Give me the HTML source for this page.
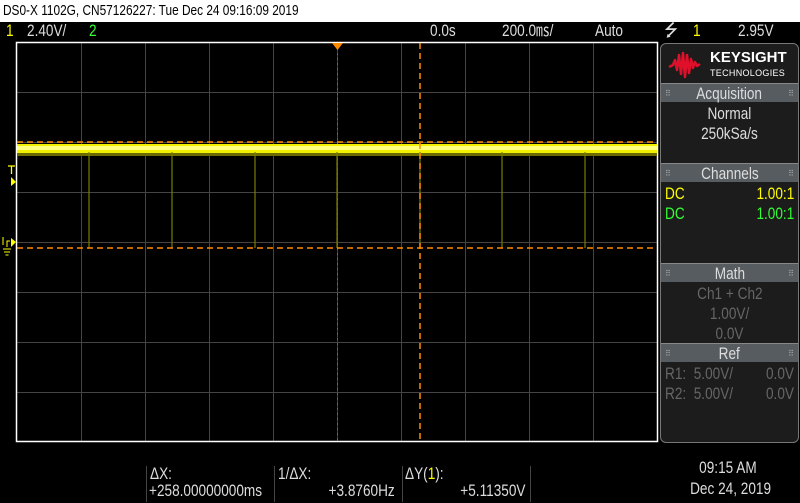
<!DOCTYPE html>
<html><head><meta charset="utf-8"><style>
*{margin:0;padding:0;box-sizing:border-box}
body{width:800px;height:503px;background:#000;overflow:hidden;position:relative;font-family:"Liberation Sans",sans-serif;color:#ddd}
.a{position:absolute;white-space:nowrap}
.n{display:inline-block;transform:scaleX(.8);transform-origin:left center}
.nr{transform-origin:right center}
.nc{transform-origin:center center}
#title{left:0;top:0;width:800px;height:22px;background:#fff;color:#000;font-size:15px;line-height:22px;padding-left:3px}
.h{top:21px;font-size:17px;line-height:20px;color:#ddd}
#panel{left:660px;top:43px;width:139px;height:400px;background:#1c1c1c;border:1px solid #777;border-radius:6px;overflow:hidden}
.bar{position:absolute;left:0;width:137px;height:19px;background:#575c60;color:#ddd;font-size:17px;line-height:19px;text-align:center;border-top:1px solid #888}
.bar:before{content:"⠿";position:absolute;left:4px;font-size:8px;color:#aaa}
.bar:after{content:"⠿";position:absolute;right:4px;font-size:8px;color:#aaa}
.pt{position:absolute;font-size:17px;line-height:20px;white-space:nowrap}
.b{font-size:17px;color:#ddd}
</style></head><body>
<div class="a" id="title"><span class="n" style="transform:scaleX(.79)">DS0-X 1102G, CN57126227: Tue Dec 24 09:16:09 2019</span></div>
<div class="a h" style="left:6px;color:#ff0"><span class="n">1</span></div>
<div class="a h" style="left:27px"><span class="n">2.40V/</span></div>
<div class="a h" style="left:89px;color:#3f3"><span class="n">2</span></div>
<div class="a h" style="left:430px"><span class="n">0.0s</span></div>
<div class="a h" style="left:502px"><span class="n">200.0㎳/</span></div>
<div class="a h" style="left:595px"><span class="n">Auto</span></div>
<div class="a h" style="left:664px">⭍</div>
<div class="a h" style="left:693px;color:#ff0"><span class="n">1</span></div>
<div class="a h" style="left:738px"><span class="n">2.95V</span></div>

<svg class="a" style="left:0;top:0" width="660" height="460">
<g stroke="#444" stroke-width="1">
<line x1="81.5" y1="43" x2="81.5" y2="442"/><line x1="145.5" y1="43" x2="145.5" y2="442"/><line x1="209.5" y1="43" x2="209.5" y2="442"/><line x1="273.5" y1="43" x2="273.5" y2="442"/><line x1="337.5" y1="43" x2="337.5" y2="442"/><line x1="401.5" y1="43" x2="401.5" y2="442"/><line x1="465.5" y1="43" x2="465.5" y2="442"/><line x1="529.5" y1="43" x2="529.5" y2="442"/><line x1="593.5" y1="43" x2="593.5" y2="442"/>
<line x1="16" y1="92.5" x2="658" y2="92.5"/><line x1="16" y1="142.5" x2="658" y2="142.5"/><line x1="16" y1="192.5" x2="658" y2="192.5"/><line x1="16" y1="242.5" x2="658" y2="242.5"/><line x1="16" y1="292.5" x2="658" y2="292.5"/><line x1="16" y1="342.5" x2="658" y2="342.5"/><line x1="16" y1="392.5" x2="658" y2="392.5"/>
</g>
<line x1="337.5" y1="43" x2="337.5" y2="442" stroke="#666" stroke-dasharray="2 3"/>
<rect x="16.5" y="42.5" width="641" height="399" fill="none" stroke="#fff" stroke-width="1.5"/>
<rect x="17" y="148" width="640" height="8" fill="#6b6b00"/>
<rect x="17" y="144" width="640" height="9" fill="#f0f000"/>
<rect x="17" y="146" width="640" height="4" fill="#ffff80"/>
<g stroke="#7a7a00" stroke-width="1.2">
<line x1="89" y1="152" x2="89" y2="248"/><line x1="172" y1="152" x2="172" y2="248"/><line x1="255" y1="152" x2="255" y2="248"/><line x1="337" y1="152" x2="337" y2="248"/><line x1="420" y1="152" x2="420" y2="248"/><line x1="502" y1="152" x2="502" y2="248"/><line x1="585" y1="152" x2="585" y2="248"/>
</g>
<g stroke="#ff8c00" stroke-width="1.5" stroke-dasharray="6 4">
<line x1="17" y1="142" x2="657" y2="142"/><line x1="17" y1="248" x2="657" y2="248"/><line x1="420" y1="43" x2="420" y2="442"/>
</g>
<polygon points="332,43 343,43 337.5,50" fill="#ff8c00"/>
<g fill="#ff0" stroke="#ff0">
<path d="M8 166h7M11.5 166v8" fill="none" stroke-width="1.3"/>
<polygon points="11,177 16,182 11,186" stroke="none"/>
<polygon points="11,238 16,242 11,247" stroke="none"/>
<path d="M3 237v8M7 247v-6h3M3 249h8M4 252h6M5.5 255h3" fill="none" stroke-width="1"/>
</g>
<line x1="4" y1="465" x2="644" y2="465" stroke="#555"/>
</svg>

<div class="a" id="panel">
<svg style="position:absolute;left:7px;top:6px" width="40" height="30"><path d="M1 17 L5 15 L7 10 L9 20 L11 5 L13 24 L15 3 L17 27 L19 5 L21 23 L23 9 L25 18 L27 12 L29 16 L32 14" fill="none" stroke="#e0102a" stroke-width="2.5" stroke-linejoin="round"/></svg>
<div class="pt" style="left:49px;top:4px;font-weight:bold;font-size:15px;color:#fff">KEYSIGHT</div>
<div class="pt" style="left:49px;top:19px;font-size:9px;color:#fff;letter-spacing:.3px">TECHNOLOGIES</div>
<div class="bar" style="top:39px"><span class="n nc">Acquisition</span></div>
<div class="pt" style="left:0;width:137px;text-align:center;top:60px"><span class="n nc">Normal</span></div>
<div class="pt" style="left:0;width:137px;text-align:center;top:80px"><span class="n nc">250kSa/s</span></div>
<div class="bar" style="top:119px"><span class="n nc">Channels</span></div>
<div class="pt" style="left:4px;top:140px;color:#ff0"><span class="n">DC</span></div><div class="pt" style="right:4px;top:140px;color:#ff0"><span class="n nr">1.00:1</span></div>
<div class="pt" style="left:4px;top:160px;color:#3f3"><span class="n">DC</span></div><div class="pt" style="right:4px;top:160px;color:#3f3"><span class="n nr">1.00:1</span></div>
<div class="bar" style="top:219px"><span class="n nc">Math</span></div>
<div class="pt" style="left:0;width:137px;text-align:center;top:240px;color:#666"><span class="n nc">Ch1 + Ch2</span></div>
<div class="pt" style="left:0;width:137px;text-align:center;top:260px;color:#666"><span class="n nc">1.00V/</span></div>
<div class="pt" style="left:0;width:137px;text-align:center;top:280px;color:#666"><span class="n nc">0.0V</span></div>
<div class="bar" style="top:299px"><span class="n nc">Ref</span></div>
<div class="pt" style="left:4px;top:320px;color:#666"><span class="n">R1:&nbsp; 5.00V/</span></div><div class="pt" style="right:4px;top:320px;color:#666"><span class="n nr">0.0V</span></div>
<div class="pt" style="left:4px;top:340px;color:#666"><span class="n">R2:&nbsp; 5.00V/</span></div><div class="pt" style="right:4px;top:340px;color:#666"><span class="n nr">0.0V</span></div>
</div>

<div class="a" style="left:146px;top:466px;width:1px;height:36px;background:#444"></div>
<div class="a" style="left:274px;top:466px;width:1px;height:36px;background:#444"></div>
<div class="a" style="left:402px;top:466px;width:1px;height:36px;background:#444"></div>
<div class="a" style="left:530px;top:466px;width:1px;height:36px;background:#444"></div>
<div class="a b" style="left:150px;top:464px"><span class="n">ΔX:</span></div>
<div class="a b" style="left:149px;top:481px"><span class="n">+258.00000000ms</span></div>
<div class="a b" style="left:278px;top:464px"><span class="n">1/ΔX:</span></div>
<div class="a b" style="left:278px;top:481px;width:117px;text-align:right"><span class="n nr">+3.8760Hz</span></div>
<div class="a b" style="left:405px;top:464px"><span class="n">ΔY(<span style="color:#ff0">1</span>):</span></div>
<div class="a b" style="left:405px;top:481px;width:120px;text-align:right"><span class="n nr">+5.11350V</span></div>
<div class="a b" style="left:680px;top:458px;width:96px;text-align:center"><span class="n nc">09:15 AM</span></div>
<div class="a b" style="left:680px;top:479px;width:96px;text-align:center"><span class="n nc">Dec 24, 2019</span></div>
</body></html>
